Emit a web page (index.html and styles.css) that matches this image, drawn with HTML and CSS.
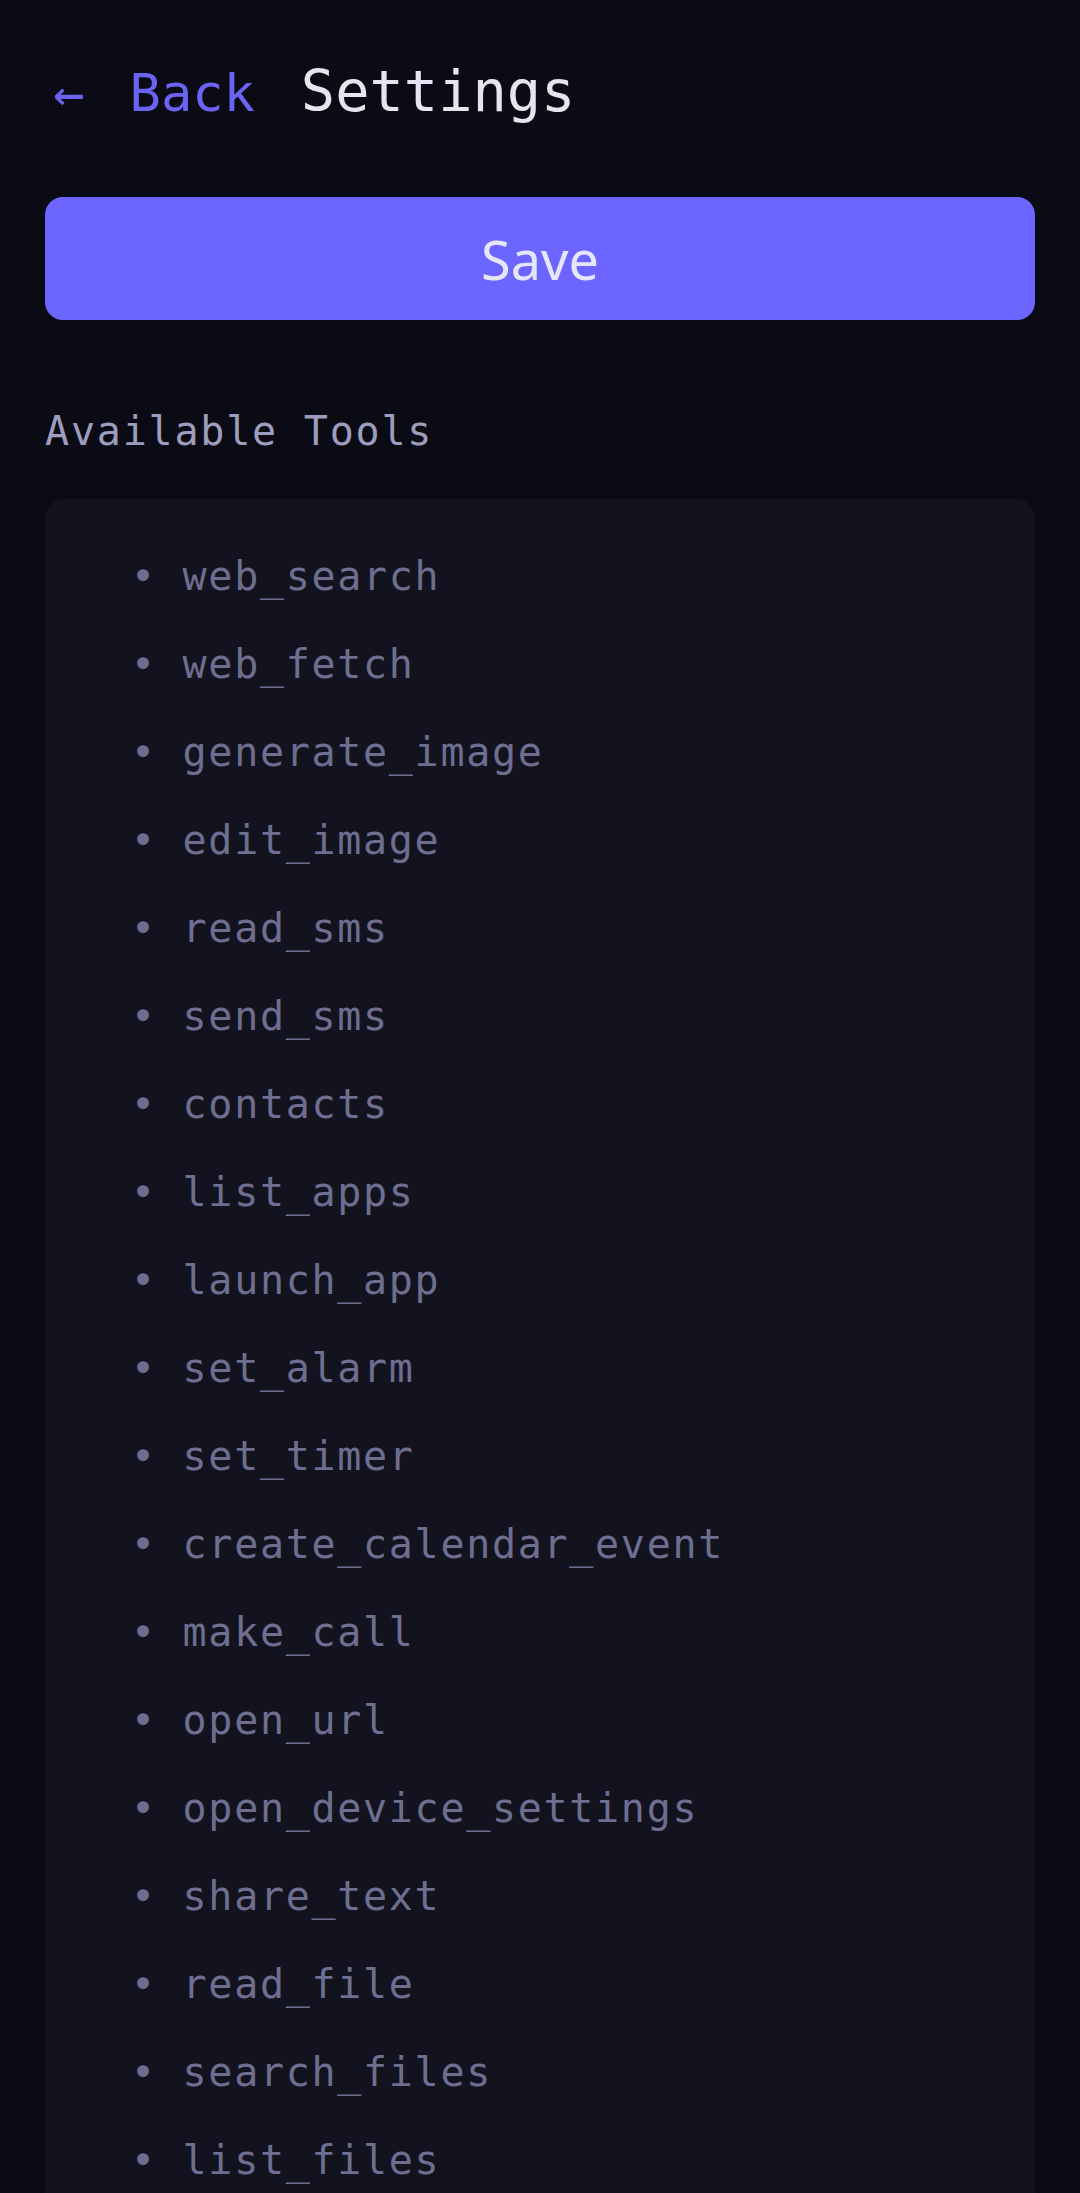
FILE: index.html
```html
<!DOCTYPE html>
<html lang="en">
<head>
  <meta charset="UTF-8" />
  <meta name="viewport" content="width=device-width, initial-scale=1.0" />
  <title>Settings</title>
  <link rel="stylesheet" href="styles.css">
</head>
<body>
  <div class="page">
    <header class="topbar">
      <a class="back" href="#"><span class="arrow">←</span> Back</a>
      <h1>Settings</h1>
    </header>

    <button class="save" onclick="save()">Save</button>

    <h2 class="section-title">Available Tools</h2>

    <div class="card">
      <ul class="tools">
        <li>web_search</li>
        <li>web_fetch</li>
        <li>generate_image</li>
        <li>edit_image</li>
        <li>read_sms</li>
        <li>send_sms</li>
        <li>contacts</li>
        <li>list_apps</li>
        <li>launch_app</li>
        <li>set_alarm</li>
        <li>set_timer</li>
        <li>create_calendar_event</li>
        <li>make_call</li>
        <li>open_url</li>
        <li>open_device_settings</li>
        <li>share_text</li>
        <li>read_file</li>
        <li>search_files</li>
        <li>list_files</li>
      </ul>
    </div>
  </div>

  <script>
    function save() {
      console.log('saved');
    }
  </script>
</body>
</html>
```

FILE: styles.css
```css
body {
  margin: 0;
  background: #0b0b15;
  color: #e2e2f0;
  font-family: "DejaVu Sans Mono", monospace;
}

.page {
  padding: 0 45px;
}

.topbar {
  display: flex;
  align-items: baseline;
  gap: 46px;
  padding-top: 57px;
}

.back {
  color: #6b64f2;
  text-decoration: none;
  font-size: 52px;
  line-height: 1.2;
}

.arrow {
  display: inline-block;
  margin-left: 8px;
  margin-right: 14px;
}

h1 {
  margin: 0;
  font-size: 57px;
  font-weight: normal;
  line-height: 1.2;
  color: #e4e4f2;
}

.save {
  display: block;
  width: 100%;
  height: 123px;
  margin-top: 72px;
  background: #6c65ff;
  color: #e6e6fb;
  border: none;
  border-radius: 18px;
  font-family: "Noto Sans", sans-serif;
  font-size: 54px;
  cursor: pointer;
}

.section-title {
  margin: 87px 0 44px;
  font-size: 40px;
  font-weight: normal;
  line-height: 1.2;
  letter-spacing: 1.8px;
  color: #9d9dbd;
}

.card {
  background: #13131f;
  border-radius: 20px;
  padding: 33px 0;
}

.tools {
  list-style: none;
  margin: 0;
  padding: 0 0 0 86px;
}

.tools li {
  font-size: 40px;
  line-height: 88px;
  letter-spacing: 1.7px;
  color: #6e6e90;
}

.tools li::before {
  content: "• ";
}
```
